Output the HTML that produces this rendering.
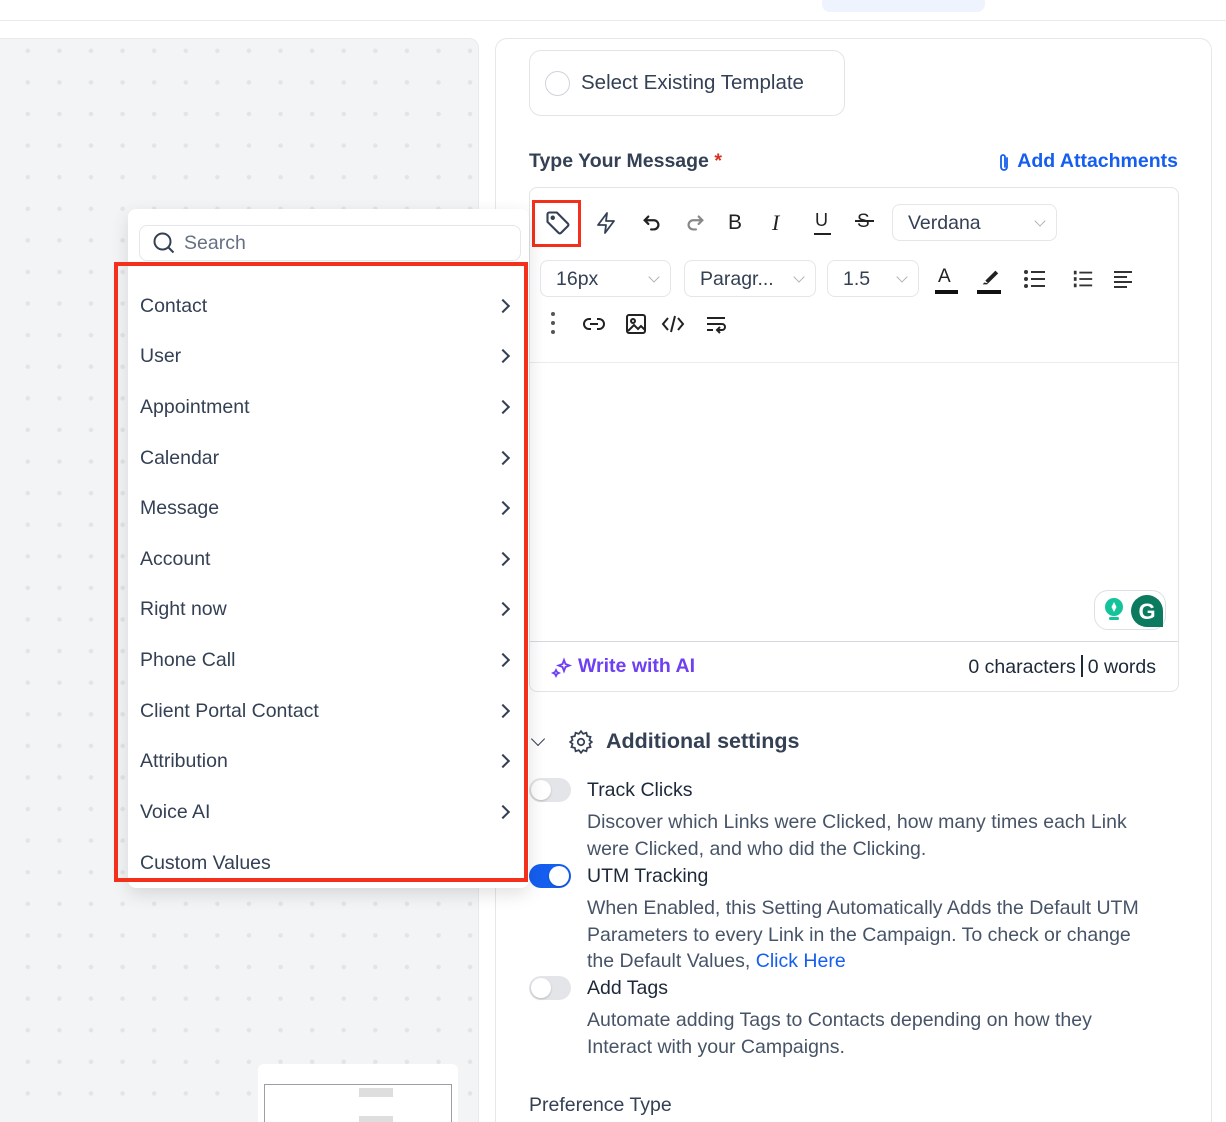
<!DOCTYPE html>
<html><head><meta charset="utf-8"><style>
*{box-sizing:border-box;margin:0;padding:0}
html,body{width:1226px;height:1122px;overflow:hidden}
body{background:#fff;font-family:"Liberation Sans",sans-serif;color:#344054;position:relative}
.a{position:absolute}
.t{font-size:19.5px;white-space:nowrap}
.canvas{left:0;top:38px;width:479px;height:1084px;background-color:#f3f4f6;background-image:radial-gradient(circle,#e2e4e8 2px,transparent 2.5px);background-size:31.6px 31.6px;background-position:12px -4px;border:1px solid #e8eaee;border-left:none;border-bottom:none;border-radius:0 10px 0 0}
.panel{left:495px;top:38px;width:717px;height:1084px;border:1px solid #e5e7eb;border-bottom:none;border-radius:12px 12px 0 0;background:#fff}
.sel{border:1px solid #d9dce2;border-radius:8px;background:#fff}
.chev{position:absolute;right:12px;top:50%;margin-top:-6px;width:8px;height:8px;border-right:1.2px solid #b0b4bb;border-bottom:1.2px solid #b0b4bb;transform:rotate(45deg)}
.item{position:absolute;left:140px;font-size:19.5px;color:#344054;white-space:nowrap}
.arr{position:absolute;left:498px;width:10px;height:10px;border-right:2px solid #344054;border-top:2px solid #344054;transform:rotate(45deg)}
.tog{position:absolute;width:42px;height:24px;border-radius:12px;background:#e4e5e8}
.tog::after{content:"";position:absolute;left:2px;top:2px;width:20px;height:20px;border-radius:50%;background:#fff;box-shadow:0 1px 2px rgba(0,0,0,.2)}
.tog.on{background:#155eef}.tog.on::after{left:20px}
.desc{font-size:19.5px;line-height:26.5px;color:#475467}
</style></head><body>
<div class="a" style="left:0;top:20px;width:1226px;height:1px;background:#e8eaee"></div>
<div class="a" style="left:822px;top:0;width:163px;height:12px;background:#eef3fd;border-radius:0 0 8px 8px"></div>
<div class="a canvas"></div>
<div class="a" style="left:258px;top:1064px;width:200px;height:58px;background:#fff;border-radius:6px 6px 0 0"></div>
<div class="a" style="left:264px;top:1084px;width:188px;height:38px;border:1px solid #9a9ea5;border-bottom:none"></div>
<div class="a" style="left:359px;top:1088px;width:34px;height:9px;background:#dedede"></div>
<div class="a" style="left:359px;top:1116px;width:34px;height:6px;background:#dedede"></div>
<div class="a panel"></div>

<div class="a sel" style="left:529px;top:50px;width:316px;height:66px;border-radius:12px;border-color:#e2e4e8"></div>
<div class="a" style="left:545px;top:71px;width:25px;height:25px;border:1px solid #cfd3d9;border-radius:50%"></div>
<div class="a t" style="left:581px;top:71px;font-size:20.5px">Select Existing Template</div>
<div class="a t" style="left:529px;top:150px;font-weight:bold;color:#344054">Type Your Message <span style="color:#d92d20">*</span></div>
<svg class="a" style="left:996px;top:152px" width="16" height="22" viewBox="0 0 16 22"><path d="M11 6v9a3 3 0 0 1-6 0V5a2 2 0 0 1 4 0v10" fill="none" stroke="#155eef" stroke-width="1.8" stroke-linecap="round"/></svg>
<div class="a t" style="right:48px;top:150px;font-weight:bold;color:#155eef">Add Attachments</div>

<div class="a" style="left:529px;top:187px;width:650px;height:505px;border:1px solid #e2e4e8;border-radius:8px"></div>
<div class="a" style="left:530px;top:362px;width:648px;height:1px;background:#eaecf0"></div>
<div class="a" style="left:530px;top:641px;width:648px;height:1px;background:#d6d9de"></div>

<div class="a" style="left:532px;top:200px;width:49px;height:47px;border:3.5px solid #f2301b"></div>
<svg class="a" style="left:544px;top:209px" width="28" height="28" viewBox="0 0 24 24" fill="none" stroke="#344054" stroke-width="1.8" stroke-linejoin="round"><path d="M3 4.5V11l9.5 9.5a1.5 1.5 0 0 0 2.1 0l5.9-5.9a1.5 1.5 0 0 0 0-2.1L11 3H4.5A1.5 1.5 0 0 0 3 4.5z"/><circle cx="7.5" cy="7.5" r="1" fill="#344054"/></svg>
<svg class="a" style="left:594px;top:210px" width="24" height="26" viewBox="0 0 24 24" fill="none" stroke="#344054" stroke-width="1.8" stroke-linejoin="round"><path d="M13 2 4 14h8l-1 8 9-12h-8z"/></svg>
<svg class="a" style="left:640px;top:212px" width="24" height="22" viewBox="0 0 24 24" fill="none" stroke="#222" stroke-width="2.4" stroke-linecap="round"><path d="M8 5 4 9l4 4M4 9h10a5 5 0 0 1 0 10h-3"/></svg>
<svg class="a" style="left:683px;top:212px" width="24" height="22" viewBox="0 0 24 24" fill="none" stroke="#888" stroke-width="2.4" stroke-linecap="round"><path d="M16 5l4 4-4 4M20 9H10a5 5 0 0 0 0 10h3"/></svg>
<div class="a" style="left:728px;top:211px;font-size:21px;color:#222">B</div>
<div class="a" style="left:772px;top:210px;font-size:22px;color:#222;font-style:italic;font-family:'Liberation Serif',serif">I</div>
<div class="a" style="left:815px;top:210px;font-size:18px;color:#222">U</div><div class="a" style="left:814px;top:233px;width:17px;height:2px;background:#222"></div>
<div class="a" style="left:857px;top:211px;font-size:19px;color:#222">S</div><div class="a" style="left:855px;top:220px;width:19px;height:2px;background:#222"></div>
<div class="a sel" style="left:892px;top:204px;width:165px;height:37px;border-color:#e4e6ea"><span class="a t" style="left:15px;top:7px;color:#344054">Verdana</span><i class="chev"></i></div>
<div class="a sel" style="left:540px;top:260px;width:131px;height:37px;border-color:#e4e6ea"><span class="a t" style="left:15px;top:7px">16px</span><i class="chev"></i></div>
<div class="a sel" style="left:684px;top:260px;width:132px;height:37px;border-color:#e4e6ea"><span class="a t" style="left:15px;top:7px">Paragr...</span><i class="chev"></i></div>
<div class="a sel" style="left:827px;top:260px;width:92px;height:37px;border-color:#e4e6ea"><span class="a t" style="left:15px;top:7px">1.5</span><i class="chev"></i></div>
<div class="a" style="left:938px;top:266px;font-size:19px;color:#222">A</div><div class="a" style="left:935px;top:290px;width:23px;height:4px;background:#111"></div>
<svg class="a" style="left:978px;top:266px" width="22" height="22" viewBox="0 0 24 24"><path d="M7 18l-2 2h5l1-1zM8 16l3 3 11-11-3-3z" fill="#222"/></svg><div class="a" style="left:977px;top:290px;width:24px;height:4px;background:#111"></div>
<svg class="a" style="left:1023px;top:268px" width="24" height="22" viewBox="0 0 24 22" fill="#333"><circle cx="3" cy="4" r="2"/><circle cx="3" cy="11" r="2"/><circle cx="3" cy="18" r="2"/><rect x="8" y="3" width="14" height="2"/><rect x="8" y="10" width="14" height="2"/><rect x="8" y="17" width="14" height="2"/></svg>
<svg class="a" style="left:1072px;top:268px" width="22" height="22" viewBox="0 0 24 22" fill="#333"><rect x="8" y="3" width="14" height="2"/><rect x="8" y="10" width="14" height="2"/><rect x="8" y="17" width="14" height="2"/><rect x="2" y="2" width="3" height="4"/><rect x="2" y="9" width="3" height="4"/><rect x="2" y="16" width="3" height="4"/></svg>
<svg class="a" style="left:1114px;top:270px" width="22" height="18" viewBox="0 0 22 18" fill="#333"><rect y="1" width="18" height="2"/><rect y="6" width="13" height="2"/><rect y="11" width="18" height="2"/><rect y="16" width="13" height="2"/></svg>
<svg class="a" style="left:549px;top:311px" width="8" height="24" viewBox="0 0 8 24" fill="#555"><circle cx="4" cy="3" r="2"/><circle cx="4" cy="12" r="2"/><circle cx="4" cy="21" r="2"/></svg>
<svg class="a" style="left:582px;top:314px" width="24" height="20" viewBox="0 0 24 20" fill="none" stroke="#222" stroke-width="2"><path d="M9 5H7a5 5 0 0 0 0 10h2M15 5h2a5 5 0 0 1 0 10h-2M8 10h8"/></svg>
<svg class="a" style="left:625px;top:313px" width="22" height="22" viewBox="0 0 22 22" fill="none" stroke="#222" stroke-width="2"><rect x="2" y="2" width="18" height="18" rx="2"/><circle cx="8" cy="8" r="2"/><path d="M3 18l6-6 4 4 3-3 4 4"/></svg>
<svg class="a" style="left:661px;top:313px" width="24" height="22" viewBox="0 0 24 22" fill="none" stroke="#222" stroke-width="2"><path d="M7 5 2 11l5 6M17 5l5 6-5 6M14 3l-4 16"/></svg>
<svg class="a" style="left:704px;top:314px" width="24" height="22" viewBox="0 0 24 22" fill="none" stroke="#222" stroke-width="2"><path d="M3 4h18M3 10h15a3 3 0 0 1 0 6h-4M16 13l-3 3 3 3M3 16h6"/></svg>
<div class="a" style="left:1094px;top:590px;width:72px;height:40px;border:1px solid #dde0e4;border-radius:14px;background:#fff"></div>
<svg class="a" style="left:1102px;top:596px" width="24" height="28" viewBox="0 0 24 28"><circle cx="12" cy="11" r="9" fill="#15c39a"/><path d="M12 6l2.5 5-2.5 5-2.5-5z" fill="#fff"/><rect x="7" y="21" width="10" height="3" rx="1.5" fill="#15c39a"/></svg>
<svg class="a" style="left:1130px;top:594px" width="34" height="34" viewBox="0 0 34 34"><path d="M17 1a16 16 0 1 0 0 32h16V17A16 16 0 0 0 17 1z" fill="#0b7a5e"/><text x="17" y="25" font-size="22" font-weight="bold" fill="#fff" text-anchor="middle" font-family="Liberation Sans">G</text></svg>
<svg class="a" style="left:551px;top:657px" width="22" height="22" viewBox="0 0 22 22" fill="none" stroke="#6e3ff3" stroke-width="1.8"><path d="M13 3l1.5 4 4 1.5-4 1.5L13 14l-1.5-4-4-1.5 4-1.5z"/><path d="M5 13l1 2 2 1-2 1-1 2-1-2-2-1 2-1z"/></svg>
<div class="a t" style="left:578px;top:655px;font-weight:bold;color:#6e3ff3">Write with AI</div>
<div class="a t" style="right:70px;top:655px;color:#1d2939">0 characters<span style="display:inline-block;width:2px;height:22px;background:#1d2939;vertical-align:-4px;margin:0 5px"></span>0 words</div>

<div class="a" style="left:533px;top:734px;width:10px;height:10px;border-right:1.5px solid #344054;border-bottom:1.5px solid #344054;transform:rotate(45deg)"></div>
<svg class="a" style="left:568px;top:729px" width="26" height="26" viewBox="0 0 24 24" fill="none" stroke="#344054" stroke-width="1.6"><circle cx="12" cy="12" r="3"/><path d="M12 2l2 2.5 3-1 .7 3.1 3.1.7-1 3L22 12l-2.2 1.7 1 3-3.1.7-.7 3.1-3-1L12 22l-2-2.5-3 1-.7-3.1-3.1-.7 1-3L2 12l2.2-1.7-1-3 3.1-.7.7-3.1 3 1z"/></svg>
<div class="a t" style="left:606px;top:729px;font-size:21.5px;font-weight:bold;color:#344054">Additional settings</div>
<div class="tog" style="left:529px;top:778px"></div>
<div class="a t" style="left:587px;top:779px;color:#1d2939">Track Clicks</div>
<div class="a desc" style="left:587px;top:809px;width:565px">Discover which Links were Clicked, how many times each Link were Clicked, and who did the Clicking.</div>
<div class="tog on" style="left:529px;top:864px"></div>
<div class="a t" style="left:587px;top:865px;color:#1d2939">UTM Tracking</div>
<div class="a desc" style="left:587px;top:895px;width:565px">When Enabled, this Setting Automatically Adds the Default UTM Parameters to every Link in the Campaign. To check or change the Default Values, <span style="color:#155eef">Click Here</span></div>
<div class="tog" style="left:529px;top:976px"></div>
<div class="a t" style="left:587px;top:977px;color:#1d2939">Add Tags</div>
<div class="a desc" style="left:587px;top:1007px;width:535px">Automate adding Tags to Contacts depending on how they Interact with your Campaigns.</div>
<div class="a t" style="left:529px;top:1094px;color:#344054">Preference Type</div>

<div class="a" style="left:128px;top:209px;width:401px;height:679px;background:#fff;border-radius:8px;box-shadow:0 6px 18px rgba(0,0,0,.12)"></div>
<div class="a" style="left:139px;top:225px;width:382px;height:36px;border:1px solid #e4e6ea;border-radius:8px"></div>
<svg class="a" style="left:152px;top:231px" width="24" height="24" viewBox="0 0 24 24" fill="none" stroke="#344054" stroke-width="2"><circle cx="10.5" cy="10.5" r="8"/><path d="M16.5 16.5l5 5"/></svg>
<div class="a t" style="left:184px;top:232px;color:#667085">Search</div>
<div class="a" style="left:114px;top:262px;width:414px;height:620px;border:4px solid #f2301b"></div>
<div class="item" style="top:295px">Contact</div><i class="arr" style="top:301px"></i>
<div class="item" style="top:345px">User</div><i class="arr" style="top:351px"></i>
<div class="item" style="top:396px">Appointment</div><i class="arr" style="top:402px"></i>
<div class="item" style="top:447px">Calendar</div><i class="arr" style="top:453px"></i>
<div class="item" style="top:497px">Message</div><i class="arr" style="top:503px"></i>
<div class="item" style="top:548px">Account</div><i class="arr" style="top:554px"></i>
<div class="item" style="top:598px">Right now</div><i class="arr" style="top:604px"></i>
<div class="item" style="top:649px">Phone Call</div><i class="arr" style="top:655px"></i>
<div class="item" style="top:700px">Client Portal Contact</div><i class="arr" style="top:706px"></i>
<div class="item" style="top:750px">Attribution</div><i class="arr" style="top:756px"></i>
<div class="item" style="top:801px">Voice AI</div><i class="arr" style="top:807px"></i>
<div class="item" style="top:852px">Custom Values</div>
</body></html>
